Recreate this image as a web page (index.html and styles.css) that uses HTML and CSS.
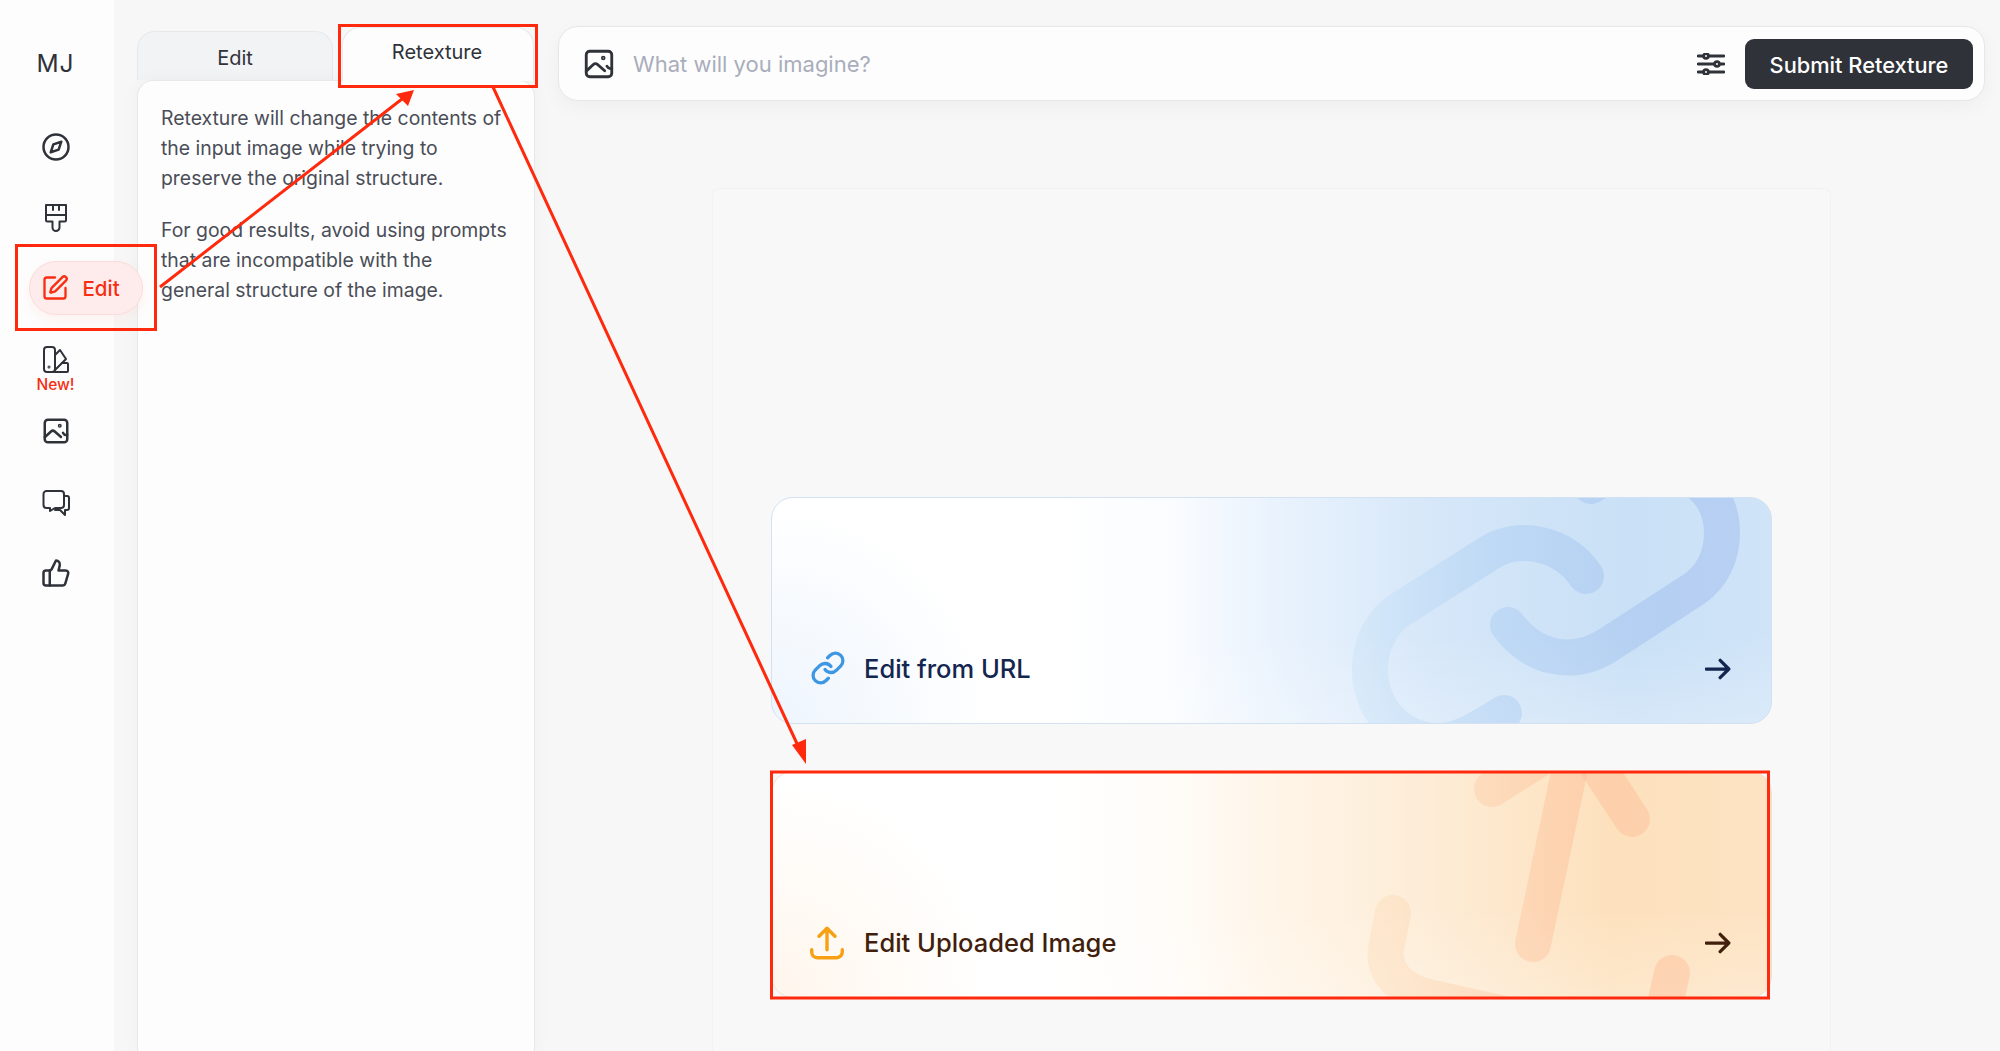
FILE: index.html
```html
<!DOCTYPE html>
<html lang="en">
<head>
  <meta charset="UTF-8">
  <meta name="viewport" content="width=device-width, initial-scale=1.0">
  <title>Retexture</title>
  <link rel="stylesheet" href="styles.css">
</head>
<body>
  <svg class="defs" width="0" height="0">
    <symbol id="icon-image" viewBox="0 0 24 24">
      <rect x="3" y="3" width="18" height="18" rx="2.5"/>
      <circle cx="15" cy="7.8" r=".6"/>
      <path d="M3 17l5-4.6c1-.9 2-.9 3 0l5 4.4"/>
      <path d="M21 15c-1.4.6-2.600-.1-3.400-1.500"/>
    </symbol>
    <symbol id="icon-arrow" viewBox="0 0 24 24">
      <path d="M1 12h21M14 4l8 8-8 8"/>
    </symbol>
    <linearGradient id="link-fade" gradientUnits="userSpaceOnUse" x1="590" y1="0" x2="900" y2="0">
      <stop offset="0" stop-color="#a5d2f2" stop-opacity=".18"/>
      <stop offset=".4" stop-color="#8fbdee" stop-opacity=".28"/>
      <stop offset="1" stop-color="#8eaeea" stop-opacity=".36"/>
    </linearGradient>
    <linearGradient id="upload-fade" gradientUnits="userSpaceOnUse" x1="610" y1="0" x2="800" y2="0">
      <stop offset="0" stop-color="#fbd3a8" stop-opacity=".3"/>
      <stop offset="1" stop-color="#fdb993" stop-opacity=".42"/>
    </linearGradient>
  </svg>

  <!-- left nav -->
  <nav class="sidebar">
    <div class="logo">MJ</div>
    <a class="nav-item">
      <svg class="icon" viewBox="0 0 24 24"><circle cx="12" cy="12" r="10"/><path d="M16.240 7.760l-2.120 6.360-6.360 2.120 2.120-6.360z"/></svg>
    </a>
    <a class="nav-item">
      <svg class="icon" viewBox="-1 -1 30 30"><path d="M4 1h20v15a1.500 1.500 0 0 1-1.500 1.500h-5v6a3.500 3.500 0 0 1-7 0v-6h-5A1.500 1.500 0 0 1 4 16z"/><path d="M4 11h20M11 1v5M17 1v5"/></svg>
    </a>
    <a class="nav-item">
      <span class="nav-pill">
        <svg class="icon pill-icon" viewBox="0 0 24 24"><path d="M12 3H5a2 2 0 0 0-2 2v14a2 2 0 0 0 2 2h14a2 2 0 0 0 2-2v-7"/><path d="M18.375 2.625a1 1 0 0 1 3 3l-9.013 9.014a2 2 0 0 1-.853.505l-2.873.84a.5.5 0 0 1-.62-.62l.84-2.873a2 2 0 0 1 .506-.852z"/></svg>
        Edit
      </span>
    </a>
    <a class="nav-item">
      <svg class="icon" viewBox="-1 -1 30 30"><rect x="2" y="1" width="11" height="25" rx="3"/><path d="M13 9l5-5 6 9-11 11"/><path d="M20 17h5a1 1 0 0 1 1 1v7a1 1 0 0 1-1 1H10"/><circle cx="7" cy="21" r=".5"/></svg>
      <span class="new-label">New!</span>
    </a>
    <a class="nav-item">
      <svg class="icon"><use href="#icon-image"/></svg>
    </a>
    <a class="nav-item">
      <svg class="icon" viewBox="-1 -1 30 30"><path d="M4.500 3h14.500a3 3 0 0 1 3 3v11a3 3 0 0 1-3 3h-6l-5 3v-3H4.500a3 3 0 0 1-3-3V6a3 3 0 0 1 3-3z"/><path d="M22 8h3a2 2 0 0 1 2 2v10a2 2 0 0 1-2 2h-2v5l-5-5h-5"/></svg>
    </a>
    <a class="nav-item">
      <svg class="icon" viewBox="0 0 24 24"><path d="M7 10v12"/><path d="M15 5.880L14 10h5.830a2 2 0 0 1 1.920 2.560l-2.330 8A2 2 0 0 1 17.500 22H4a2 2 0 0 1-2-2v-8a2 2 0 0 1 2-2h2.760a2 2 0 0 0 1.790-1.110L12 2a3.130 3.130 0 0 1 3 3.880z"/></svg>
    </a>
  </nav>

  <!-- tabs + help text -->
  <section class="side-panel">
    <div class="tabs">
      <div class="tab">Edit</div>
      <div class="tab tab-active">Retexture</div>
    </div>
    <div class="panel-body">
      <p>Retexture will change the contents of<br>the input image while trying to<br>preserve the original structure.</p>
      <p>For good results, avoid using prompts<br>that are incompatible with the<br>general structure of the image.</p>
    </div>
  </section>

  <main class="main">
    <div class="prompt-bar">
      <svg class="icon prompt-icon"><use href="#icon-image"/></svg>
      <div class="placeholder">What will you imagine?</div>
      <svg class="sliders" viewBox="0 0 28 22">
        <path d="M1 3h26M1 11h26M1 19h26"/>
        <circle cx="9" cy="3" r="2.400"/>
        <circle cx="20" cy="11" r="2.400"/>
        <circle cx="9" cy="19" r="2.400"/>
      </svg>
      <button class="submit-btn">Submit Retexture</button>
    </div>

    <div class="canvas">
      <div class="source-card card-url">
        <svg class="card-art" viewBox="0 0 1000 227">
          <path d="M814 78C790 43 745 37 717 55L629 111C610 123 598 146 598 171C598 212 628 243 667 243C685 243 700 235 732 215"/>
          <path d="M736 127C760 160 800 170 836 147L922 91C940 79 950 58 950 35C950 -5 920 -30 880 -30C855 -30 840 -25 819 -12"/>
        </svg>
        <svg class="card-icon link-icon" viewBox="0 0 24 24"><path d="M10 13a5 5 0 0 0 7.540.54l3-3a5 5 0 0 0-7.070-7.070l-1.720 1.710"/><path d="M14 11a5 5 0 0 0-7.540-.54l-3 3a5 5 0 0 0 7.070 7.070l1.710-1.710"/></svg>
        <span class="card-title">Edit from URL</span>
        <svg class="card-arrow"><use href="#icon-arrow"/></svg>
      </div>

      <div class="source-card card-upload">
        <svg class="card-art" viewBox="0 0 1000 227">
          <path d="M761 172L805 -37"/>
          <path d="M720 17L805 -37L860 47"/>
          <path d="M621 141L615 172C608 200 630 220 660 226L860 270"/>
          <path d="M900 201L885 270"/>
        </svg>
        <svg class="card-icon upload-icon" viewBox="0 0 30 30"><path d="M15 2v19M8 9l7-7 7 7M1.500 21v2a5 5 0 0 0 5 5h17a5 5 0 0 0 5-5v-2"/></svg>
        <span class="card-title">Edit Uploaded Image</span>
        <svg class="card-arrow"><use href="#icon-arrow"/></svg>
      </div>
    </div>
  </main>

  <!-- red annotations drawn on top of the screenshot -->
  <svg class="annotations" viewBox="0 0 2000 1051">
    <rect x="16.500" y="245.500" width="139" height="84"/>
    <rect x="339.500" y="25.500" width="197" height="61"/>
    <rect x="771.500" y="772" width="997" height="226"/>
    <path d="M160 287L402 99M493 87L799 748"/>
    <polygon points="414,90 396,94 408,106"/>
    <polygon points="806,764 792,745 806,739"/>
  </svg>
</body>
</html>
```

FILE: styles.css
```css
* {
  margin: 0;
  padding: 0;
  box-sizing: border-box;
}

body {
  font-family: 'Inter', 'Noto Sans', sans-serif;
  background: #f7f7f7;
  color: #2f3239;
  height: 100vh;
  display: flex;
  overflow: hidden;
  position: relative;
}

.defs {
  position: absolute;
}

.icon {
  width: 30px;
  height: 30px;
  fill: none;
  stroke: currentColor;
  stroke-width: 2;
  stroke-linecap: round;
  stroke-linejoin: round;
}

/* Sidebar */
.sidebar {
  width: 114px;
  flex-shrink: 0;
  background: #fdfdfd;
  padding-top: 17px;
}

.logo {
  height: 94.500px;
  padding-top: 30px;
  padding-right: 3px;
  text-align: center;
  font-size: 24.500px;
  line-height: 32px;
  letter-spacing: 1px;
}

.nav-item {
  height: 71px;
  padding-right: 3px;
  display: flex;
  align-items: center;
  justify-content: center;
  position: relative;
  color: #2f3239;
}

.nav-pill {
  width: 114px;
  height: 54px;
  margin-top: -2px;
  margin-left: 30px;
  margin-right: -30px;
  flex-shrink: 0;
  padding-left: 11px;
  display: flex;
  align-items: center;
  gap: 14px;
  border-radius: 27px;
  background: #fdeceb;
  border: 1px solid #fcdcd8;
  color: #f62f12;
  font-size: 20.500px;
  font-weight: 500;
  box-shadow: 0 6px 14px rgba(246, 47, 18, 0.05);
}

.pill-icon {
  width: 28px;
  height: 28px;
}

.new-label {
  position: absolute;
  left: 0;
  right: 3px;
  top: 50px;
  text-align: center;
  font-size: 15.500px;
  font-weight: 500;
  color: #f62f12;
  line-height: 20px;
}

/* Tabs + panel */
.side-panel {
  width: 398px;
  margin-left: 23px;
  padding-top: 27px;
  flex-shrink: 0;
  display: flex;
  flex-direction: column;
}

.tabs {
  display: flex;
  align-items: flex-end;
  gap: 9px;
  height: 53px;
}

.tab {
  width: 196px;
  height: 49px;
  padding-top: 4px;
  display: flex;
  align-items: center;
  justify-content: center;
  font-size: 20px;
  background: #f2f3f5;
  border: 1px solid #e7e8ec;
  border-bottom: 0;
  border-radius: 18px 18px 0 0;
}

.tab-active {
  width: 192px;
  height: 54px;
  margin-bottom: -1px;
  padding-top: 0;
  padding-right: 2px;
  padding-bottom: 5px;
  background: #fdfdfd;
  position: relative;
  z-index: 1;
}

.panel-body {
  flex: 1;
  padding: 22px 10px 0 23px;
  background: #fdfdfd;
  border: 1px solid #e7e8ec;
  border-bottom: 0;
  border-radius: 16px 16px 0 0;
  box-shadow: 0 0 18px rgba(0, 0, 0, 0.04);
  font-size: 19.400px;
  line-height: 30px;
  color: #4a4d57;
}

.panel-body p {
  margin-bottom: 22px;
}

/* Main column */
.main {
  flex: 1;
  min-width: 0;
  margin-left: 23px;
  padding: 26px 15px 0 0;
  display: flex;
  flex-direction: column;
}

.prompt-bar {
  height: 75px;
  flex-shrink: 0;
  padding: 0 11px 0 23px;
  display: flex;
  align-items: center;
  background: #fdfdfd;
  border: 1px solid #e6e7eb;
  border-radius: 20px;
  box-shadow: 0 6px 20px rgba(0, 0, 0, 0.04);
}

.prompt-icon {
  width: 34px;
  height: 34px;
  stroke-width: 2;
}

.placeholder {
  flex: 1;
  margin-left: 17px;
  font-size: 22px;
  color: #a9adbb;
}

.sliders {
  width: 28px;
  height: 22px;
  margin-right: 20px;
  fill: #fdfdfd;
  stroke: #2f3239;
  stroke-width: 2.800;
  stroke-linecap: round;
}

.submit-btn {
  width: 228px;
  height: 50px;
  padding-top: 3px;
  border: 0;
  border-radius: 9px;
  background: #2f3239;
  color: #ffffff;
  font-family: inherit;
  font-size: 21.800px;
  font-weight: 500;
}

.canvas {
  flex: 1;
  width: 1119px;
  margin: 87px 0 0 154px;
  padding-top: 308px;
  background: #f8f8f8;
  border: 1px solid #f2f2f2;
  border-bottom: 0;
  border-radius: 8px 8px 0 0;
  display: flex;
  flex-direction: column;
  align-items: center;
  gap: 47px;
}

.source-card {
  width: 1001px;
  height: 227px;
  flex-shrink: 0;
  padding: 0 40px 37px 38px;
  display: flex;
  align-items: flex-end;
  position: relative;
  overflow: hidden;
  border: 1px solid;
  border-radius: 22px;
}

.card-url {
  color: #14264f;
  border-color: #d3e2f3;
  background:
    radial-gradient(circle at 0 100%, rgba(226, 238, 252, 0.6), rgba(226, 238, 252, 0) 220px),
    linear-gradient(0deg, rgba(255, 255, 255, 0.22), rgba(255, 255, 255, 0) 40%),
    linear-gradient(90deg, #ffffff 28%, #fafcff 40%, #eaf3fd 50%, #d6e7f9 66%, #c9e0f6 86%, #d0e4f8 100%);
}

.card-upload {
  color: #421f0c;
  border-color: #f3e2d2;
  background:
    radial-gradient(circle at 0 100%, rgba(255, 240, 224, 0.6), rgba(255, 240, 224, 0) 220px),
    linear-gradient(0deg, rgba(255, 255, 255, 0.22), rgba(255, 255, 255, 0) 40%),
    linear-gradient(90deg, #ffffff 28%, #fffcf8 40%, #fff5e8 50%, #fdecd6 66%, #fde1bd 84%, #fde3c3 100%);
}

.card-art {
  position: absolute;
  top: 0;
  left: 0;
  width: 1000px;
  height: 227px;
  fill: none;
  stroke-width: 36;
  stroke-linecap: round;
  stroke-linejoin: round;
}

.card-url .card-art {
  stroke: url(#link-fade);
}

.card-upload .card-art {
  stroke: url(#upload-fade);
}

.card-icon {
  width: 34px;
  height: 34px;
  position: relative;
  fill: none;
  stroke-linecap: round;
  stroke-linejoin: round;
}

.link-icon {
  width: 36px;
  height: 36px;
  stroke: #3d97e3;
  stroke-width: 2.200;
}

.upload-icon {
  stroke: #f8a013;
  stroke-width: 3;
}

.card-title {
  flex: 1;
  margin-left: 20px;
  position: relative;
  font-size: 25.500px;
  font-weight: 500;
  line-height: 34px;
}

.card-url .card-title {
  margin-left: 18px;
}

.card-arrow {
  width: 26px;
  height: 26px;
  margin-bottom: 4px;
  position: relative;
  fill: none;
  stroke: currentColor;
  stroke-width: 3;
  stroke-linecap: round;
  stroke-linejoin: round;
}

/* Annotation overlay */
.annotations {
  position: absolute;
  top: 0;
  left: 0;
  width: 2000px;
  height: 1051px;
  pointer-events: none;
}

.annotations rect,
.annotations path {
  fill: none;
  stroke: #ff2a0d;
  stroke-width: 3;
}

.annotations polygon {
  fill: #ff2a0d;
}
```
